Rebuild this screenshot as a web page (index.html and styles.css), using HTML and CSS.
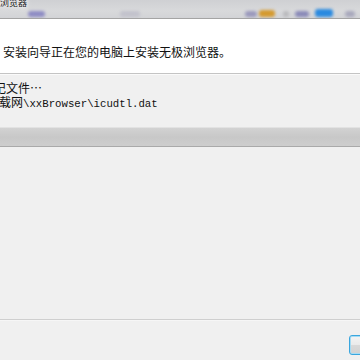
FILE: index.html
```html
<!DOCTYPE html>
<html lang="zh-CN">
<head>
<meta charset="utf-8">
<title>无极浏览器 安装</title>
<link rel="stylesheet" href="styles.css">
</head>
<body>
<div class="window">
  <div class="titlebar">
    <span class="title">无极浏览器</span>
    <span class="blob b1"></span>
    <span class="blob b2"></span>
    <span class="blob b3"></span>
    <span class="blob b4"></span>
    <span class="blob b5"></span>
    <span class="blob b6"></span>
    <span class="blob b7"></span>
    <span class="blob b8"></span>
  </div>
  <div class="header">
    <p class="subtitle">安装向导正在您的电脑上安装无极浏览器。</p>
  </div>
  <div class="content">
    <p class="status">记文件…</p>
    <p class="file">载网<span class="path">\xxBrowser\icudtl.dat</span></p>
    <div class="progress"></div>
  </div>
  <div class="footer">
    <button class="btn" type="button"></button>
  </div>
  <div class="bottom"></div>
</div>
</body>
</html>
```

FILE: styles.css
```css
html, body {
  margin: 0;
  padding: 0;
  width: 360px;
  height: 360px;
  overflow: hidden;
  background: #f0f0f0;
}

.window {
  width: 360px;
  height: 360px;
  display: flex;
  flex-direction: column;
  overflow: hidden;
  font-family: "Noto Sans CJK SC", "Noto Sans", sans-serif;
  color: #111;
}

.titlebar {
  position: relative;
  height: 18px;
  flex: none;
  border-bottom: 1px solid #a4a4a4;
  background: linear-gradient(#cfd0d3, #d8d9db 60%, #d2d3d6);
  overflow: hidden;
}

.title {
  position: absolute;
  left: -18px;
  top: -3px;
  font-size: 9px;
  line-height: 12px;
  color: #1a1a1a;
  text-shadow: 0 0 4px #fff, 0 0 6px #fff;
  white-space: nowrap;
}

.blob {
  position: absolute;
  top: 11px;
  height: 6px;
  border-radius: 3px;
  filter: blur(1.5px);
}
.b1 { left: 28px; width: 17px; background: #8e8cc4; }
.b2 { left: 120px; width: 20px; background: #c2c2cc; }
.b3 { left: 245px; width: 12px; background: #9a98bc; }
.b4 { left: 259px; width: 16px; background: #d49a30; top: 10px; height: 7px; }
.b5 { left: 283px; width: 6px; background: #b8b8bc; }
.b6 { left: 295px; width: 14px; background: #8a8ab8; }
.b7 { left: 315px; width: 18px; background: #2a8ae0; top: 9px; height: 8px; }
.b8 { left: 345px; width: 10px; background: #a8a8bc; }

.header {
  height: 54px;
  flex: none;
  background: #fff;
  border-bottom: 1px solid #c4c4c4;
  box-shadow: 0 1px 0 #fafafa;
}

.subtitle {
  margin: 0;
  padding: 25px 0 0 3px;
  font-size: 12px;
  line-height: 16px;
  white-space: nowrap;
}

.content {
  flex: none;
  height: 238px;
  padding-top: 7px;
  border-bottom: 1px solid #cfcfcf;
}

.status, .file {
  margin: 0;
  font-size: 12px;
  line-height: 14px;
  white-space: nowrap;
}

.status { text-indent: -6px; }
.file { text-indent: -1px; }

.path {
  font-family: "Liberation Mono", "DejaVu Sans Mono", monospace;
  font-size: 10.7px;
}

.progress {
  margin: 16px -4px 0;
  height: 18px;
  border-top: 1px solid #e2e2e2;
  border-bottom: 1px solid #a9a9a9;
  background: linear-gradient(#d2d2d2, #c8c8c8 50%, #cdcdcd);
}

.footer {
  flex: none;
  height: 42px;
  display: flex;
  justify-content: flex-end;
  align-items: flex-start;
  padding-top: 14px;
  box-sizing: border-box;
  border-top: 1px solid #f6f6f6;
}

.btn {
  width: 75px;
  height: 20px;
  margin-right: -64px;
  border: 1px solid #3aa6de;
  border-radius: 3px;
  box-shadow: inset 0 0 0 1px #a6dcf4;
  background: linear-gradient(#f4f4f4, #eaeaea 50%, #d9d9d9 51%, #d2d2d2);
  padding: 0;
}

.bottom {
  flex: 1;
  border-top: 1px solid #b0b0b0;
  background: #dadada;
}
```
